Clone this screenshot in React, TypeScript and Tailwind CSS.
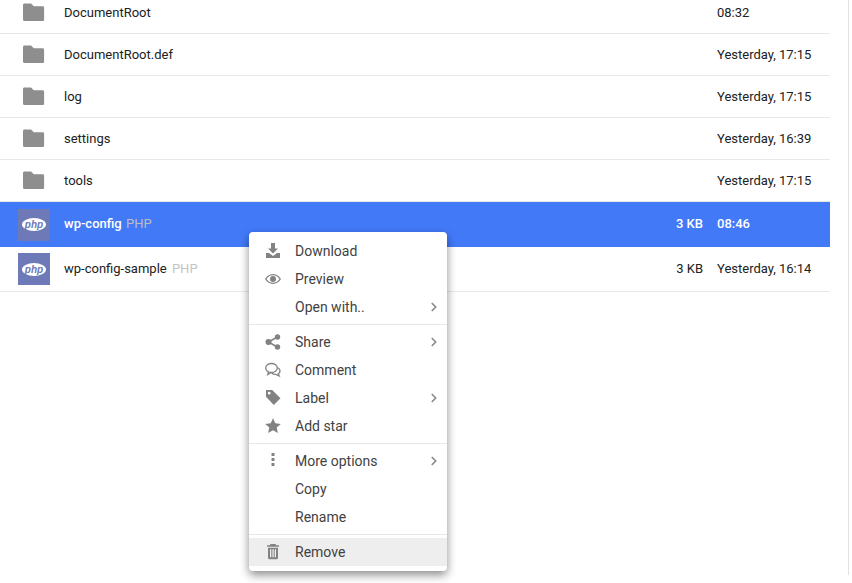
import { ChevronRight } from 'lucide-react';
import { ReactNode } from 'react';

const folders = [
  { name: 'DocumentRoot', date: '08:32' },
  { name: 'DocumentRoot.def', date: 'Yesterday, 17:15' },
  { name: 'log', date: 'Yesterday, 17:15' },
  { name: 'settings', date: 'Yesterday, 16:39' },
  { name: 'tools', date: 'Yesterday, 17:15' },
];

function FolderIcon() {
  return (
    <svg width="24" height="24" viewBox="0 0 24 24" className="fill-[#8e8e8e]">
      <path d="M2.500 2.500h6.500l2.800 2.800h8.800c1 0 1.500.6 1.500 1.500v11.700c0 1-.6 1.500-1.500 1.500H2.500C1.600 20 1 19.400 1 18.500V4c0-.9.600-1.500 1.500-1.500z" />
    </svg>
  );
}

function PhpIcon() {
  return (
    <div className="w-8 h-8 bg-[#6e79b8] flex items-center justify-center">
      <svg width="24" height="13" viewBox="0 0 24 13">
        <ellipse cx="12" cy="6.500" rx="12" ry="6.500" fill="#fff" />
        <text x="12" y="9.500" textAnchor="middle" fontFamily="'Liberation Sans', sans-serif" fontSize="10" fontWeight="700" fontStyle="italic" fill="#6e79b8">php</text>
      </svg>
    </div>
  );
}

const I = { className: 'fill-[#828282]', width: 16, height: 16, viewBox: '0 0 16 16' };

const menuIcons: Record<string, ReactNode> = {
  download: (
    <svg {...I}>
      <path d="M6 0h4v5.500h3L8 10.500 3 5.500h3zM1 10h3l4 3 4-3h3v5H1z" />
    </svg>
  ),
  preview: (
    <svg {...I}>
      <path fillRule="evenodd" d="M8 3c3.500 0 6.300 2.200 8 5-1.700 2.800-4.500 5-8 5s-6.300-2.200-8-5c1.700-2.800 4.500-5 8-5zm0 1.200C5.200 4.200 3 5.800 1.500 8 3 10.200 5.200 11.800 8 11.800s5-1.600 6.500-3.800C13 5.800 10.800 4.200 8 4.200zM8 5a3 3 0 1 1 0 6 3 3 0 0 1 0-6z" />
    </svg>
  ),
  share: (
    <svg {...I}>
      <circle cx="3.500" cy="8" r="3" />
      <circle cx="12.500" cy="3" r="2.700" />
      <circle cx="12.500" cy="13" r="2.700" />
      <path d="M3 7.200 12 2.200l.8 1.500-9 5zM3.800 7.200l9 5-.8 1.500-9-5z" />
    </svg>
  ),
  comment: (
    <svg {...I} fill="none" className="stroke-[#828282]">
      <ellipse cx="6.500" cy="6" rx="5.800" ry="4.500" strokeWidth="1.300" />
      <path d="M3.500 10 2.800 12.500 6 10.500M12.500 5.500c1.800 1 2.800 2.300 2.500 4-.2 1-.9 1.800-1.800 2.300l1 2.200-3.500-1.600c-1.500.1-3-.4-4-1.400" strokeWidth="1.300" />
    </svg>
  ),
  label: (
    <svg {...I}>
      <path fillRule="evenodd" d="M1 0h6.200L15.500 8.300 8.800 15 1 6.700zm3.200 1.800a1.400 1.400 0 1 0 0 2.800 1.400 1.400 0 0 0 0-2.800z" />
    </svg>
  ),
  star: (
    <svg {...I}>
      <path d="M8 .3l2.300 5 5.500.6-4.100 3.700 1.200 5.400L8 12.300l-4.900 2.700 1.200-5.400L.2 5.900l5.500-.6z" />
    </svg>
  ),
  more: (
    <svg {...I}>
      <rect x="6.500" y="0" width="3" height="3" rx=".6" />
      <rect x="6.500" y="5" width="3" height="3" rx=".6" />
      <rect x="6.500" y="10" width="3" height="3" rx=".6" />
    </svg>
  ),
  remove: (
    <svg {...I}>
      <path fillRule="evenodd" d="M5.500 0h5l.6 1.200H14v1.600H2V1.200h2.900zM3 3.800h10V14c0 .8-.5 1.200-1.200 1.200H4.200C3.500 15.200 3 14.800 3 14zm2 1.500v8h1.300v-8zm2.400 0v8h1.300v-8zm2.300 0v8H11v-8z" />
    </svg>
  ),
};

function MenuItem({ icon, label, arrow, active }: { icon?: string; label: string; arrow?: boolean; active?: boolean }) {
  return (
    <div className={`h-7 flex items-center ${active ? 'bg-[#eeeeee]' : ''}`}>
      <div className="w-[46px] pl-4 shrink-0 flex">{icon && menuIcons[icon]}</div>
      <span className="flex-1 text-sm text-[#424242]">{label}</span>
      {arrow && <ChevronRight className="w-3.5 h-3.5 mr-[6px] text-[#8a8a8a]" strokeWidth={3} />}
    </div>
  );
}

function Divider() {
  return <div className="h-px my-[3px] bg-[#e6e6e6]" />;
}

export default function App() {
  return (
    <div className="relative w-[852px] h-[583px] overflow-hidden bg-white text-[13px] text-[#212121] font-['Roboto',sans-serif]">
      <div className="w-[849px] h-full border-r border-[#e2e2e2]">
        <div className="w-[830px] -mt-2">
          {folders.map((f) => (
            <div key={f.name} className="h-[42px] flex items-center border-b border-[#e8e8e8]">
              <div className="w-[64px] pl-[22px] shrink-0">
                <FolderIcon />
              </div>
              <span className="flex-1">{f.name}</span>
              <span className="w-[113px] shrink-0">{f.date}</span>
            </div>
          ))}
          <div className="h-[45px] flex items-center bg-[#4279f7] text-white font-medium">
            <div className="w-[64px] pl-[18px] shrink-0">
              <PhpIcon />
            </div>
            <span className="flex-1 mb-0.5">
              wp-config <span className="ml-px text-[#bdbdbd] font-normal">PHP</span>
            </span>
            <span className="mr-3.5 mb-0.5">3 KB</span>
            <span className="w-[113px] shrink-0 mb-0.5">08:46</span>
          </div>
          <div className="h-[45px] flex items-center border-b border-[#e8e8e8]">
            <div className="w-[64px] pl-[18px] shrink-0">
              <PhpIcon />
            </div>
            <span className="flex-1">
              wp-config-sample <span className="ml-0.5 text-[#c4c4c4]">PHP</span>
            </span>
            <span className="mr-3.5">3 KB</span>
            <span className="w-[113px] shrink-0">Yesterday, 16:14</span>
          </div>
        </div>
      </div>

      <div className="absolute left-[249px] top-[232px] w-[198px] h-[339px] pt-[5px] bg-white rounded-sm shadow-[0_4px_10px_rgba(0,0,0,0.45)]">
        <MenuItem icon="download" label="Download" />
        <MenuItem icon="preview" label="Preview" />
        <MenuItem label="Open with.." arrow />
        <Divider />
        <MenuItem icon="share" label="Share" arrow />
        <MenuItem icon="comment" label="Comment" />
        <MenuItem icon="label" label="Label" arrow />
        <MenuItem icon="star" label="Add star" />
        <Divider />
        <MenuItem icon="more" label="More options" arrow />
        <MenuItem label="Copy" />
        <MenuItem label="Rename" />
        <Divider />
        <MenuItem icon="remove" label="Remove" active />
      </div>
    </div>
  );
}
